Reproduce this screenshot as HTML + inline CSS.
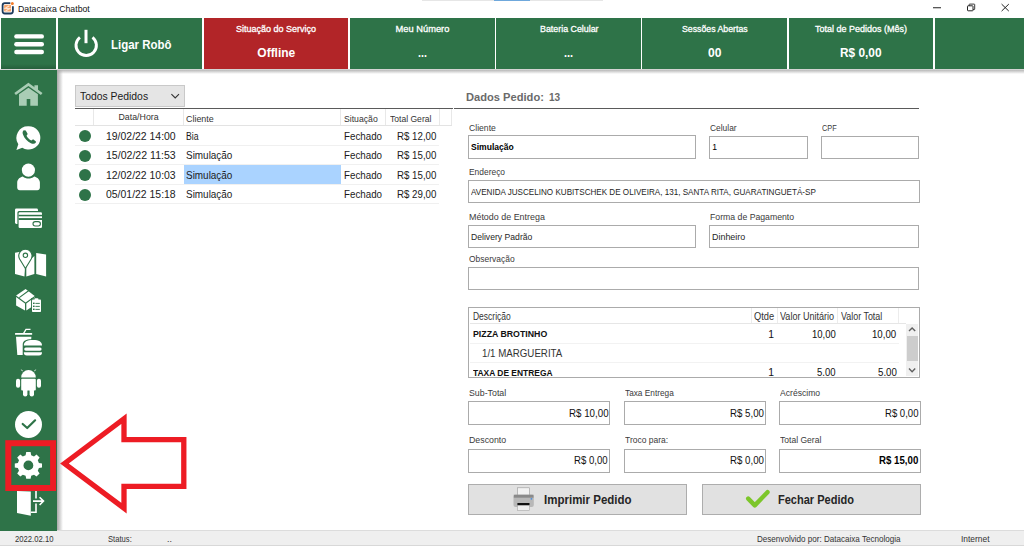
<!DOCTYPE html>
<html><head><meta charset="utf-8">
<style>
*{margin:0;padding:0;box-sizing:border-box}
html,body{width:1024px;height:546px;overflow:hidden;background:#fff}
body{position:relative;font-family:"Liberation Sans",sans-serif}
.a{position:absolute}
.t{position:absolute;white-space:pre;font-family:"Liberation Sans",sans-serif;transform-origin:0 0}
.g{background:#2e7348}
.box{position:absolute;border:1px solid #ababab;background:#fff}
</style></head><body>
<!-- top artifacts -->
<div class="a" style="left:422px;top:0;width:181px;height:1px;background:#e6e6e6"></div>
<div class="a" style="left:494px;top:0;width:36px;height:1px;background:#6fa8dc"></div>
<!-- header -->
<div class="a" style="left:0;top:69px;width:1024px;height:1px;background:#d4d4d4"></div>
<div class="a" style="left:0;top:70px;width:1024px;height:4px;background:linear-gradient(#b9b9b9,rgba(255,255,255,0))"></div>
<div class="a g" style="left:1px;top:18px;width:55px;height:51px;background:linear-gradient(#2e7348 0,#2e7348 46px,#265f3b 51px)"></div>
<div class="a g" style="left:58px;top:18px;width:144.3px;height:51px"></div>
<div class="a" style="left:204px;top:18px;width:144.3px;height:51px;background:#b22528"></div>
<div class="a g" style="left:350px;top:18px;width:144.7px;height:51px"></div>
<div class="a g" style="left:496px;top:18px;width:144.7px;height:51px"></div>
<div class="a g" style="left:642px;top:18px;width:144.8px;height:51px"></div>
<div class="a g" style="left:788.9px;top:18px;width:144.1px;height:51px"></div>
<div class="a g" style="left:935px;top:18px;width:89px;height:51px"></div>
<!-- sidebar -->
<div class="a" style="left:57px;top:70px;width:6px;height:461px;background:linear-gradient(90deg,#a9a9a9,rgba(255,255,255,0))"></div>
<!-- status bar -->
<div class="a" style="left:0;top:530px;width:1024px;height:16px;background:#efefef;border-top:1px solid #dcdcdc;border-bottom:1px solid #d8d8d8"></div>
<div class="a g" style="left:0;top:70px;width:57px;height:461px"></div>
<!-- left list -->
<div class="a" style="left:75px;top:84.6px;width:110px;height:22.4px;background:#e5e5e5;border:1px solid #c9c9c9"></div>
<div class="a" style="left:75px;top:107.8px;width:378px;height:1.4px;background:#5a5a5a"></div>
<div class="a" style="left:75px;top:124.8px;width:376.6px;height:1px;background:#e3e3e3"></div>
<div class="a" style="left:93px;top:109px;width:1px;height:16px;background:#e8e8e8"></div>
<div class="a" style="left:183px;top:109px;width:1px;height:16px;background:#e8e8e8"></div>
<div class="a" style="left:340.3px;top:109px;width:1px;height:16px;background:#e8e8e8"></div>
<div class="a" style="left:385px;top:109px;width:1px;height:16px;background:#e8e8e8"></div>
<div class="a" style="left:438.5px;top:109px;width:1px;height:16px;background:#e8e8e8"></div>
<div class="a" style="left:451.3px;top:109px;width:1px;height:16px;background:#e8e8e8"></div>
<div class="a" style="left:75px;top:144.6px;width:364px;height:1px;background:#f0f0f0"></div>
<div class="a" style="left:75px;top:164.1px;width:364px;height:1px;background:#f0f0f0"></div>
<div class="a" style="left:75px;top:183.6px;width:364px;height:1px;background:#f0f0f0"></div>
<div class="a" style="left:75px;top:203.1px;width:364px;height:1px;background:#f0f0f0"></div>
<div class="a" style="left:183.8px;top:165.1px;width:157px;height:18.6px;background:#aad3ff"></div>
<div class="a" style="left:78.8px;top:130px;width:12px;height:12px;border-radius:50%;background:#2e7348"></div>
<div class="a" style="left:78.8px;top:149.5px;width:12px;height:12px;border-radius:50%;background:#2e7348"></div>
<div class="a" style="left:78.8px;top:169px;width:12px;height:12px;border-radius:50%;background:#2e7348"></div>
<div class="a" style="left:78.8px;top:188.5px;width:12px;height:12px;border-radius:50%;background:#2e7348"></div>
<!-- right panel -->
<div class="a" style="left:453.9px;top:107.7px;width:465.2px;height:1.4px;background:#5a5a5a"></div>
<div class="box" style="left:467.8px;top:135.4px;width:228.3px;height:23.3px"></div>
<div class="box" style="left:709.0px;top:135.7px;width:98.7px;height:23.3px"></div>
<div class="box" style="left:820.7px;top:135.7px;width:98.3px;height:23.0px"></div>
<div class="box" style="left:468.0px;top:179.9px;width:451.7px;height:22.8px"></div>
<div class="box" style="left:468.0px;top:224.9px;width:228.1px;height:23.3px"></div>
<div class="box" style="left:709.0px;top:224.8px;width:210.0px;height:23.3px"></div>
<div class="box" style="left:468.0px;top:266.9px;width:451.0px;height:23.6px"></div>
<!-- items table -->
<div class="box" style="left:468.2px;top:306.5px;width:451.8px;height:71.4px"></div>
<div class="a" style="left:469.7px;top:322.8px;width:436px;height:1px;background:#e6e6e6"></div>
<div class="a" style="left:751px;top:308px;width:1px;height:15px;background:#ececec"></div>
<div class="a" style="left:776.9px;top:308px;width:1px;height:15px;background:#ececec"></div>
<div class="a" style="left:837.4px;top:308px;width:1px;height:15px;background:#ececec"></div>
<div class="a" style="left:898.4px;top:308px;width:1px;height:15px;background:#ececec"></div>
<div class="a" style="left:469.7px;top:343px;width:429px;height:1px;background:#f2f2f2"></div>
<div class="a" style="left:469.7px;top:362px;width:429px;height:1px;background:#f2f2f2"></div>
<div class="a" style="left:905.8px;top:323.8px;width:12.7px;height:52.6px;background:#f0f0f0"></div>
<div class="a" style="left:906.5px;top:336.1px;width:11.2px;height:25.4px;background:#cdcdcd"></div>
<!-- totals -->
<div class="box" style="left:468.2px;top:401.1px;width:142.3px;height:23.9px"></div>
<div class="box" style="left:624.0px;top:401.1px;width:142.0px;height:23.9px"></div>
<div class="box" style="left:779.0px;top:401.1px;width:141.9px;height:23.6px"></div>
<div class="box" style="left:468.2px;top:448.6px;width:142.3px;height:24.0px"></div>
<div class="box" style="left:624.0px;top:448.6px;width:142.0px;height:24.0px"></div>
<div class="box" style="left:779.0px;top:448.9px;width:141.9px;height:23.7px"></div>
<!-- buttons -->
<div class="a" style="left:468.4px;top:483.7px;width:218.9px;height:31.4px;background:#e1e1e1;border:1px solid #adadad"></div>
<div class="a" style="left:702.4px;top:483.7px;width:218.3px;height:31.4px;background:#e1e1e1;border:1px solid #adadad"></div>

<svg class="a" style="left:0;top:0" width="1024" height="546" viewBox="0 0 1024 546">
<!-- app icon -->
<path d="M10.3 3.1 H4.8 A2.2 2.2 0 0 0 2.6 5.3 V11.3 A2.2 2.2 0 0 0 4.8 13.5 H10.7 A2.2 2.2 0 0 0 12.9 11.3 V6.3" fill="none" stroke="#1d3b5c" stroke-width="1.8"/>
<rect x="4.1" y="4.8" width="7" height="6.8" rx="1.2" fill="#f7a468"/>
<path d="M9.3 5.8 L5.2 8.4 L9.6 8.6 L5.6 10.9" fill="none" stroke="#fde3cf" stroke-width="1.1"/>
<circle cx="12.3" cy="3.6" r="1.5" fill="#f57c2a"/>
<!-- window controls -->
<line x1="933" y1="7.75" x2="941" y2="7.75" stroke="#222" stroke-width="1"/>
<rect x="967.5" y="5.8" width="5.5" height="5" rx="0.6" fill="none" stroke="#222" stroke-width="1"/>
<path d="M969.2 5.8 V4.6 Q969.2 4.1 969.7 4.1 H974.2 Q974.7 4.1 974.7 4.6 V9.1 Q974.7 9.6 974.2 9.6 H973" fill="none" stroke="#222" stroke-width="0.9"/>
<path d="M1001.6 4.1 L1008.8 11.1 M1008.8 4.1 L1001.6 11.1" stroke="#222" stroke-width="1"/>
<!-- hamburger -->
<g stroke="#fff" stroke-width="4.4" stroke-linecap="round">
<line x1="16.4" y1="36.4" x2="41.8" y2="36.4"/>
<line x1="16.4" y1="44.2" x2="41.8" y2="44.2"/>
<line x1="16.4" y1="52" x2="41.8" y2="52"/>
</g>
<!-- power -->
<path d="M79.9 37.3 A10.2 10.2 0 1 0 92.5 37.3" fill="none" stroke="#fff" stroke-width="2.9"/>
<line x1="86" y1="29.8" x2="86" y2="43.2" stroke="#fff" stroke-width="3"/>
<!-- home -->
<g fill="#a9cdb5">
<path d="M28.4 82.8 L42.5 93 L40.9 95 L28.4 86 L15.9 95 L14.3 93 Z"/>
<path d="M34.4 85.3 H38 V91 L34.4 88.5 Z"/>
<path d="M19 94.2 L28.4 87.8 L37.9 94.2 V105.8 H30.3 V98.9 H26.7 V105.8 H19 Z"/>
</g>
<!-- whatsapp -->
<path d="M28.5 126.2 A11.7 11.7 0 1 1 22.3 147.7 L16.4 149.9 L18.3 144.3 A11.7 11.7 0 0 1 28.5 126.2 Z" fill="#fff"/>
<path transform="translate(29.3 136.8) scale(1.15) translate(-28.2 -136.8)" d="M23.4 131 C22.4 131.6 22 133 22.8 135 C24 138.3 26.6 141 29.6 142.4 C31.6 143.3 33 143 33.8 141.9 L34 140.8 L31.5 139 L30 140 C28.3 139.2 26.6 137.5 25.8 135.8 L26.8 134.3 L25.1 131.4 Z" fill="#2e7348"/>
<!-- person -->
<circle cx="28.4" cy="170.1" r="6.6" fill="#fff"/>
<path d="M22.8 176.4 C20.5 177 17.3 178.6 17.2 182.6 V187.5 C17.2 189 18.2 190.2 19.8 190.2 H37.3 C38.9 190.2 39.9 189 39.9 187.5 V182.6 C39.8 178.6 36.5 177 34.2 176.4 C32.5 177.8 30.5 178.4 28.5 178.4 C26.5 178.4 24.5 177.8 22.8 176.4 Z" fill="#fff"/>
<!-- cards -->
<rect x="15" y="208.6" width="23" height="15.4" rx="1.4" fill="#fff"/>
<rect x="17.4" y="211.1" width="25.8" height="18.1" rx="1.6" fill="#2e7348"/>
<rect x="18.6" y="212.3" width="23.4" height="15.7" rx="1.2" fill="#fff"/>
<rect x="18.6" y="214.8" width="23.4" height="1.5" fill="#2e7348"/>
<rect x="18.6" y="218.1" width="23.4" height="1.9" fill="#2e7348"/>
<rect x="33" y="221.6" width="7.4" height="4.4" rx="2.2" fill="none" stroke="#2e7348" stroke-width="1.1"/>
<!-- map -->
<g fill="#fff">
<path d="M15 252.7 L22 251.5 L25.4 265 L24.5 276.5 L15 274 Z"/>
<path d="M26.3 263 L34.4 256 L34.4 274 L26.3 276.5 Z"/>
<path d="M36.2 253 L46.1 254.5 L46.1 276.5 L36.2 274 Z"/>
</g>
<path d="M25.4 268.5 L19.6 259 A6.6 6.6 0 1 1 31.2 259 Z" fill="#fff" stroke="#2e7348" stroke-width="1.1"/>
<circle cx="25.4" cy="255.3" r="2.2" fill="none" stroke="#2e7348" stroke-width="1.1"/>
<line x1="25.4" y1="268.5" x2="25.4" y2="277" stroke="#2e7348" stroke-width="1.1"/>
<!-- box + clipboard -->
<path d="M25.6 289 L34.7 295.9 L25.6 302.6 L16.1 295.6 Z" fill="#fff"/>
<path d="M16.1 297 L25 303.6 V310.6 L16.1 305.4 Z" fill="#fff"/>
<path d="M26.3 303.6 L34.7 297.3 V305 L26.3 310.6 Z" fill="#fff"/>
<path d="M19.2 297.6 L28.6 290.7" stroke="#2e7348" stroke-width="1.1"/>
<rect x="31.1" y="298.2" width="10.6" height="14.5" fill="#2e7348"/>
<rect x="32" y="299.4" width="9" height="12.6" rx="0.8" fill="#fff"/>
<rect x="34.5" y="298.2" width="4" height="2" rx="1" fill="#fff"/>
<g fill="#2e7348"><rect x="33" y="302.6" width="1.6" height="1.4"/><rect x="35.4" y="302.9" width="4.4" height="0.9"/><rect x="33" y="305.6" width="1.6" height="1.4"/><rect x="35.4" y="305.9" width="4.4" height="0.9"/><rect x="33" y="308.6" width="1.6" height="1.4"/><rect x="35.4" y="308.9" width="4.4" height="0.9"/></g>
<!-- food -->
<g fill="#fff">
<rect x="15" y="333" width="17.2" height="1.8" rx="0.6"/>
<path d="M23.6 333.3 L26 329.3 H30.5" fill="none" stroke="#fff" stroke-width="1.3"/>
<path d="M16 336.8 H31.4 L31.2 339.3 C26 339.5 23 340.5 22.7 344.5 V355 H17.3 Z"/>
<path d="M23.8 345.6 C23.8 341.8 26.7 340 33 340 C39 340 42 341.8 42 345.6 Z"/>
<rect x="24.2" y="347.5" width="17.4" height="3.2" rx="1.6"/>
<path d="M23.8 352.2 H42 C42 354.3 41 355.4 39 355.4 H26.8 C24.8 355.4 23.8 354.3 23.8 352.2 Z"/>
</g>
<!-- android -->
<g fill="#fff">
<path d="M21.2 377.4 A7.3 7.3 0 0 1 35.8 377.4 Z"/>
<path d="M22.5 371.2 L21.4 369.6 M34.5 371.2 L35.6 369.6" stroke="#fff" stroke-width="0.9"/>
<rect x="21.2" y="378.8" width="14.6" height="11.8" rx="1"/>
<rect x="16" y="378.8" width="4.1" height="9" rx="2"/>
<rect x="36.9" y="378.8" width="4.1" height="9" rx="2"/>
<rect x="23" y="388" width="4.4" height="8.4" rx="2.2"/>
<rect x="29.6" y="388" width="4.4" height="8.4" rx="2.2"/>
</g>
<!-- check circle -->
<circle cx="28.5" cy="424.5" r="13.5" fill="#fff"/>
<path d="M22.7 424 L27.2 428 L35.1 420.3" fill="none" stroke="#2e7348" stroke-width="2.2" stroke-linecap="round" stroke-linejoin="round"/>
<!-- gear -->
<g transform="translate(28.4 465.4)">
<path id="gear" fill="#fff" d="M-2.2 -13.3 H2.2 L2.8 -10.2 L5.6 -9 L8.1 -10.9 L11.2 -7.8 L9.4 -5.2 L10.5 -2.5 L13.6 -2 V2.2 L10.5 2.7 L9.4 5.4 L11.2 8 L8.1 11.1 L5.6 9.3 L2.8 10.4 L2.2 13.4 H-2.2 L-2.8 10.4 L-5.6 9.3 L-8.1 11.1 L-11.2 8 L-9.4 5.4 L-10.5 2.7 L-13.6 2.2 V-2 L-10.5 -2.5 L-9.4 -5.2 L-11.2 -7.8 L-8.1 -10.9 L-5.6 -9 L-2.8 -10.2 Z"/>
<circle r="4.9" fill="#2e7348"/>
</g>
<!-- red box -->
<rect x="8.3" y="443.2" width="44.8" height="44.8" fill="none" stroke="#ed1c24" stroke-width="6"/>
<!-- exit -->
<path d="M17 491 L30.8 491.5 V515.7 L17 513 Z" fill="#fff"/>
<path d="M36 491 V498.5 M36 503.5 V512.2 H30.8" fill="none" stroke="#fff" stroke-width="1.6"/>
<path d="M33 501.1 H43.5 M39.6 497.2 L43.5 501.1 L39.6 505" fill="none" stroke="#fff" stroke-width="1.6"/>
<!-- arrow -->
<path d="M64.5 463.5 L124 418.7 V439.7 H183.8 V486.3 H124 V508.2 Z" fill="none" stroke="#ed1c24" stroke-width="5.3" stroke-linejoin="miter"/>
<!-- dropdown chevron -->
<path d="M171.4 94.2 L175.2 98 L179 94.2" fill="none" stroke="#333" stroke-width="1.1"/>
<!-- scrollbar arrows -->
<path d="M909 331 L912.1 327.9 L915.2 331" fill="none" stroke="#606060" stroke-width="1.4"/>
<path d="M909 368.6 L912.1 371.7 L915.2 368.6" fill="none" stroke="#606060" stroke-width="1.4"/>
<!-- printer -->
<rect x="517.4" y="487.8" width="12.1" height="7.5" fill="#f2f2f2" stroke="#999" stroke-width="0.6"/>
<rect x="513.5" y="494.7" width="20.3" height="12.3" rx="2" fill="#b8b8b8"/>
<rect x="513.8" y="494.7" width="19.7" height="3" fill="#8a8a8a"/>
<rect x="517.4" y="503" width="12.1" height="2.2" fill="#111"/>
<rect x="517.4" y="505.5" width="12.1" height="5" fill="#efefef" stroke="#999" stroke-width="0.5"/>
<circle cx="531.4" cy="498.8" r="0.9" fill="#4d8fe0"/>
<!-- green check -->
<path d="M748.2 498.6 L754.8 505.4 L767.5 492.2" fill="none" stroke="#7cc62a" stroke-width="4.4" stroke-linecap="round" stroke-linejoin="round"/>
</svg>
<div class="t" style="left:17.60px;top:3px;font-size:9.6px;line-height:11px;color:#111;transform:scaleX(0.9093);">Datacaixa Chatbot</div>
<div class="t" style="left:110.60px;top:38px;font-size:12.5px;line-height:14px;color:#ffffff;font-weight:bold;transform:scaleX(0.9160);">Ligar Robô</div>
<div class="t" style="left:236.20px;top:24px;font-size:9.3px;line-height:10px;color:#ffffff;-webkit-text-stroke:0.3px #ffffff;transform:scaleX(0.9683);">Situação do Serviço</div>
<div class="t" style="left:257.30px;top:46px;font-size:12px;line-height:14px;color:#ffffff;font-weight:bold;">Offline</div>
<div class="t" style="left:395.60px;top:24px;font-size:9.3px;line-height:10px;color:#ffffff;-webkit-text-stroke:0.3px #ffffff;">Meu Número</div>
<div class="t" style="left:418.00px;top:45px;font-size:13px;line-height:15px;color:#ffffff;font-weight:bold;transform:scaleX(0.8199);">...</div>
<div class="t" style="left:539.50px;top:24px;font-size:9.3px;line-height:10px;color:#ffffff;-webkit-text-stroke:0.3px #ffffff;transform:scaleX(0.9525);">Bateria Celular</div>
<div class="t" style="left:564.00px;top:45px;font-size:13px;line-height:15px;color:#ffffff;font-weight:bold;transform:scaleX(0.8475);">...</div>
<div class="t" style="left:681.90px;top:24px;font-size:9.3px;line-height:10px;color:#ffffff;-webkit-text-stroke:0.3px #ffffff;transform:scaleX(0.9413);">Sessões Abertas</div>
<div class="t" style="left:707.90px;top:46px;font-size:12px;line-height:14px;color:#ffffff;font-weight:bold;transform:scaleX(1.0060);">00</div>
<div class="t" style="left:815.00px;top:24px;font-size:9.3px;line-height:10px;color:#ffffff;-webkit-text-stroke:0.3px #ffffff;transform:scaleX(0.9675);">Total de Pedidos (Mês)</div>
<div class="t" style="left:840.20px;top:46px;font-size:12px;line-height:14px;color:#ffffff;font-weight:bold;transform:scaleX(0.9891);">R$ 0,00</div>
<div class="t" style="left:79.80px;top:89px;font-size:11.8px;line-height:14px;color:#1a1a1a;transform:scaleX(0.8798);">Todos Pedidos</div>
<div class="t" style="left:118.50px;top:112px;font-size:8.8px;line-height:10px;color:#333;">Data/Hora</div>
<div class="t" style="left:186.20px;top:114px;font-size:8.8px;line-height:10px;color:#333;transform:scaleX(1.0142);">Cliente</div>
<div class="t" style="left:343.90px;top:114px;font-size:8.8px;line-height:10px;color:#333;transform:scaleX(0.9845);">Situação</div>
<div class="t" style="left:389.50px;top:114px;font-size:8.8px;line-height:10px;color:#333;transform:scaleX(0.9730);">Total Geral</div>
<div class="t" style="left:106.30px;top:130px;font-size:10.5px;line-height:12px;color:#1a1a1a;transform:scaleX(0.9945);">19/02/22 14:00</div>
<div class="t" style="left:186.20px;top:130px;font-size:10.5px;line-height:12px;color:#1a1a1a;transform:scaleX(0.8276);">Bia</div>
<div class="t" style="left:343.90px;top:130px;font-size:10.5px;line-height:12px;color:#1a1a1a;transform:scaleX(0.9303);">Fechado</div>
<div class="t" style="left:396.60px;top:130px;font-size:10.5px;line-height:12px;color:#1a1a1a;transform:scaleX(0.9242);">R$ 12,00</div>
<div class="t" style="left:106.30px;top:149px;font-size:10.5px;line-height:12px;color:#1a1a1a;transform:scaleX(1.0058);">15/02/22 11:53</div>
<div class="t" style="left:186.20px;top:149px;font-size:10.5px;line-height:12px;color:#1a1a1a;transform:scaleX(0.9463);">Simulação</div>
<div class="t" style="left:343.90px;top:149px;font-size:10.5px;line-height:12px;color:#1a1a1a;transform:scaleX(0.9303);">Fechado</div>
<div class="t" style="left:396.60px;top:149px;font-size:10.5px;line-height:12px;color:#1a1a1a;transform:scaleX(0.9242);">R$ 15,00</div>
<div class="t" style="left:106.30px;top:169px;font-size:10.5px;line-height:12px;color:#1a1a1a;transform:scaleX(0.9945);">12/02/22 10:03</div>
<div class="t" style="left:186.20px;top:169px;font-size:10.5px;line-height:12px;color:#1a1a1a;transform:scaleX(0.9463);">Simulação</div>
<div class="t" style="left:343.90px;top:169px;font-size:10.5px;line-height:12px;color:#1a1a1a;transform:scaleX(0.9303);">Fechado</div>
<div class="t" style="left:396.60px;top:169px;font-size:10.5px;line-height:12px;color:#1a1a1a;transform:scaleX(0.9242);">R$ 15,00</div>
<div class="t" style="left:106.30px;top:188px;font-size:10.5px;line-height:12px;color:#1a1a1a;transform:scaleX(0.9945);">05/01/22 15:18</div>
<div class="t" style="left:186.20px;top:188px;font-size:10.5px;line-height:12px;color:#1a1a1a;transform:scaleX(0.9463);">Simulação</div>
<div class="t" style="left:343.90px;top:188px;font-size:10.5px;line-height:12px;color:#1a1a1a;transform:scaleX(0.9303);">Fechado</div>
<div class="t" style="left:396.60px;top:188px;font-size:10.5px;line-height:12px;color:#1a1a1a;transform:scaleX(0.9242);">R$ 29,00</div>
<div class="t" style="left:465.90px;top:91px;font-size:11.3px;line-height:12px;color:#6a6a6a;font-weight:bold;transform:scaleX(0.9848);">Dados Pedido:</div>
<div class="t" style="left:549.00px;top:91px;font-size:11.3px;line-height:12px;color:#6a6a6a;font-weight:bold;transform:scaleX(0.8929);">13</div>
<div class="t" style="left:468.80px;top:122px;font-size:9.9px;line-height:11px;color:#3a3a3a;transform:scaleX(0.8723);">Cliente</div>
<div class="t" style="left:709.50px;top:122px;font-size:9.9px;line-height:11px;color:#3a3a3a;transform:scaleX(0.8508);">Celular</div>
<div class="t" style="left:821.70px;top:122px;font-size:9.9px;line-height:11px;color:#3a3a3a;transform:scaleX(0.7475);">CPF</div>
<div class="t" style="left:471.00px;top:142px;font-size:8.6px;line-height:10px;color:#000;font-weight:bold;transform:scaleX(0.9953);">Simulação</div>
<div class="t" style="left:712.30px;top:142px;font-size:8.6px;line-height:10px;color:#000;">1</div>
<div class="t" style="left:469.00px;top:166px;font-size:9.9px;line-height:11px;color:#3a3a3a;transform:scaleX(0.8520);">Endereço</div>
<div class="t" style="left:470.80px;top:186px;font-size:9.9px;line-height:11px;color:#1e1e1e;transform:scaleX(0.8196);">AVENIDA JUSCELINO KUBITSCHEK DE OLIVEIRA, 131, SANTA RITA, GUARATINGUETÁ-SP</div>
<div class="t" style="left:468.90px;top:211px;font-size:9.9px;line-height:11px;color:#3a3a3a;transform:scaleX(0.9033);">Método de Entrega</div>
<div class="t" style="left:709.50px;top:211px;font-size:9.9px;line-height:11px;color:#3a3a3a;transform:scaleX(0.8806);">Forma de Pagamento</div>
<div class="t" style="left:470.90px;top:231px;font-size:9.9px;line-height:11px;color:#1e1e1e;transform:scaleX(0.8731);">Delivery Padrão</div>
<div class="t" style="left:711.80px;top:231px;font-size:9.9px;line-height:11px;color:#1e1e1e;transform:scaleX(0.9030);">Dinheiro</div>
<div class="t" style="left:468.90px;top:253px;font-size:9.9px;line-height:11px;color:#3a3a3a;transform:scaleX(0.8564);">Observação</div>
<div class="t" style="left:473.40px;top:311px;font-size:10.1px;line-height:11px;color:#333;transform:scaleX(0.8397);">Descrição</div>
<div class="t" style="left:753.80px;top:311px;font-size:10.1px;line-height:11px;color:#333;transform:scaleX(0.9217);">Qtde</div>
<div class="t" style="left:780.40px;top:311px;font-size:10.1px;line-height:11px;color:#333;transform:scaleX(0.8950);">Valor Unitário</div>
<div class="t" style="left:841.00px;top:311px;font-size:10.1px;line-height:11px;color:#333;transform:scaleX(0.8822);">Valor Total</div>
<div class="t" style="left:472.90px;top:328px;font-size:9.6px;line-height:11px;color:#111;font-weight:bold;transform:scaleX(0.9143);">PIZZA BROTINHO</div>
<div class="t" style="left:768.23px;top:329px;font-size:10.4px;line-height:11px;color:#111;">1</div>
<div class="t" style="left:811.60px;top:329px;font-size:10.4px;line-height:11px;color:#111;transform:scaleX(0.9174);">10,00</div>
<div class="t" style="left:872.20px;top:329px;font-size:10.4px;line-height:11px;color:#111;transform:scaleX(0.9289);">10,00</div>
<div class="t" style="left:481.60px;top:347px;font-size:11.2px;line-height:12px;color:#333;transform:scaleX(0.8686);">1/1 MARGUERITA</div>
<div class="t" style="left:472.80px;top:367px;font-size:9.6px;line-height:11px;color:#111;font-weight:bold;transform:scaleX(0.8779);">TAXA DE ENTREGA</div>
<div class="t" style="left:768.23px;top:367px;font-size:10.4px;line-height:11px;color:#111;">1</div>
<div class="t" style="left:817.00px;top:367px;font-size:10.4px;line-height:11px;color:#111;transform:scaleX(0.9146);">5,00</div>
<div class="t" style="left:877.50px;top:367px;font-size:10.4px;line-height:11px;color:#111;transform:scaleX(0.9343);">5,00</div>
<div class="t" style="left:468.90px;top:387px;font-size:9.9px;line-height:11px;color:#3a3a3a;transform:scaleX(0.8918);">Sub-Total</div>
<div class="t" style="left:624.80px;top:387px;font-size:9.9px;line-height:11px;color:#3a3a3a;transform:scaleX(0.8379);">Taxa Entrega</div>
<div class="t" style="left:779.80px;top:387px;font-size:9.9px;line-height:11px;color:#3a3a3a;transform:scaleX(0.8695);">Acréscimo</div>
<div class="t" style="left:568.50px;top:407px;font-size:10.5px;line-height:12px;color:#111;transform:scaleX(0.9289);">R$ 10,00</div>
<div class="t" style="left:729.80px;top:407px;font-size:10.5px;line-height:12px;color:#111;transform:scaleX(0.9239);">R$ 5,00</div>
<div class="t" style="left:884.50px;top:407px;font-size:10.5px;line-height:12px;color:#111;transform:scaleX(0.9103);">R$ 0,00</div>
<div class="t" style="left:468.90px;top:434px;font-size:9.9px;line-height:11px;color:#3a3a3a;transform:scaleX(0.8918);">Desconto</div>
<div class="t" style="left:624.80px;top:434px;font-size:9.9px;line-height:11px;color:#3a3a3a;transform:scaleX(0.8618);">Troco para:</div>
<div class="t" style="left:779.80px;top:434px;font-size:9.9px;line-height:11px;color:#3a3a3a;transform:scaleX(0.8649);">Total Geral</div>
<div class="t" style="left:574.40px;top:454px;font-size:10.5px;line-height:12px;color:#111;transform:scaleX(0.9157);">R$ 0,00</div>
<div class="t" style="left:729.80px;top:454px;font-size:10.5px;line-height:12px;color:#111;transform:scaleX(0.9239);">R$ 0,00</div>
<div class="t" style="left:878.70px;top:454px;font-size:10.5px;line-height:12px;color:#000;font-weight:bold;transform:scaleX(0.9219);">R$ 15,00</div>
<div class="t" style="left:543.80px;top:492px;font-size:13.3px;line-height:15px;color:#262626;font-weight:bold;transform:scaleX(0.8655);">Imprimir Pedido</div>
<div class="t" style="left:777.50px;top:492px;font-size:13.3px;line-height:15px;color:#262626;font-weight:bold;transform:scaleX(0.8294);">Fechar Pedido</div>
<div class="t" style="left:15.20px;top:533px;font-size:9.8px;line-height:11px;color:#333;transform:scaleX(0.7849);">2022.02.10</div>
<div class="t" style="left:108.00px;top:533px;font-size:9.8px;line-height:11px;color:#333;transform:scaleX(0.7796);">Status:</div>
<div class="t" style="left:167.00px;top:533px;font-size:9.8px;line-height:11px;color:#333;transform:scaleX(0.9009);">..</div>
<div class="t" style="left:757.20px;top:533px;font-size:9.8px;line-height:11px;color:#333;transform:scaleX(0.8249);">Desenvolvido por: Datacaixa Tecnologia</div>
<div class="t" style="left:961.20px;top:533px;font-size:9.8px;line-height:11px;color:#333;transform:scaleX(0.8579);">Internet</div>
<div class="a" style="left:469px;top:376px;width:436px;height:1px;background:#fff"></div><div class="a" style="left:469px;top:378px;width:440px;height:8px;background:#fff"></div><div class="a" style="left:469px;top:377px;width:436px;height:1px;background:#ababab"></div>
</body></html>
